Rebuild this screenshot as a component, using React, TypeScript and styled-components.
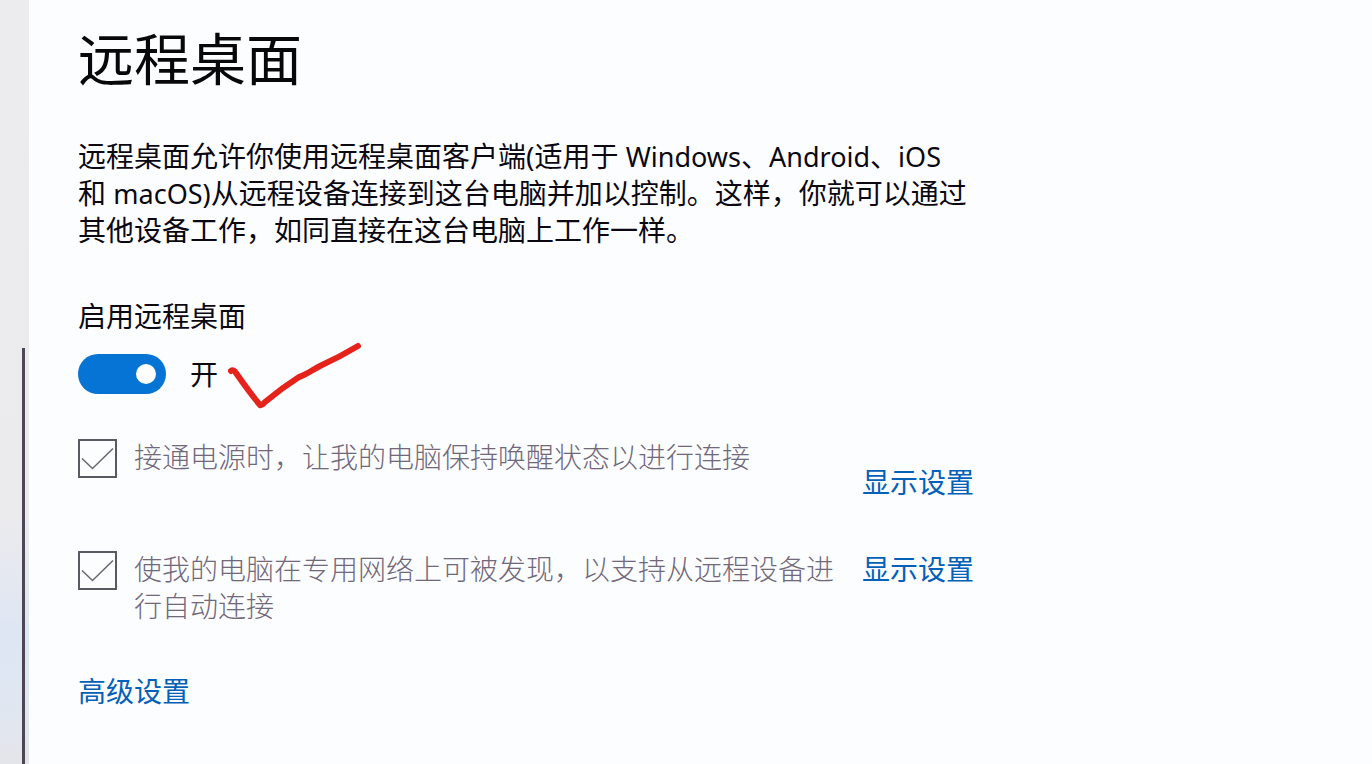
import React from "react";
import styled, { createGlobalStyle } from "styled-components";

const GlobalStyle = createGlobalStyle`
  * { box-sizing: border-box; }
  body {
    margin: 0;
    background: #fcfdff;
    color: #0b0812;
    font-family: "Noto Sans", "Noto Sans CJK SC", sans-serif;
    font-size: 28px;
    line-height: 37px;
  }
`;

const Page = styled.div`
  display: flex;
  min-height: 100vh;
`;

const Rail = styled.div`
  flex: none;
  display: flex;
  flex-direction: column;
  align-items: flex-end;
  width: 29px;
  padding: 348px 4px 0 0;
  background: linear-gradient(to bottom, #ececee 0%, #ebebee 68%, #dfe6f3 82%, #dfe7f3 90%, #e4e5ea 100%);
`;

const ScrollThumb = styled.div`
  flex: 1;
  width: 3px;
  background: #4d4655;
`;

const Main = styled.main`
  flex: 1;
  min-width: 0;
  padding: 26px 49px 40px;
`;

const Title = styled.h1`
  margin: 0;
  font-size: 56px;
  line-height: 64px;
  font-weight: 400;
  color: #08080a;
`;

const Description = styled.p`
  max-width: 896px;
  margin: 48px 0 0;
`;

const Latin = styled.span`
  font-size: 27px;
`;

const SwitchLabel = styled.label`
  display: block;
  margin-top: 49px;
`;

const SwitchRow = styled.div`
  position: relative;
  display: flex;
  align-items: center;
  gap: 24px;
  margin-top: 19px;
`;

const Switch = styled.input`
  appearance: none;
  display: flex;
  align-items: center;
  justify-content: flex-end;
  width: 88px;
  height: 40px;
  margin: 0;
  padding: 0 10px;
  border-radius: 20px;
  background: #0574d4;

  &::before {
    content: "";
    width: 20px;
    height: 20px;
    border-radius: 50%;
    background: #fff;
  }
  &:not(:checked) {
    justify-content: flex-start;
    background: #777;
  }
`;

const PenMark = styled.svg`
  position: absolute;
  left: 148px;
  top: -14px;
  width: 140px;
  height: 72px;
  pointer-events: none;
`;

const Options = styled.div`
  display: grid;
  row-gap: 50px;
  margin-top: 45px;
`;

const OptionRow = styled.div<{ $link: "end" | "start" }>`
  display: grid;
  grid-template-columns: 756px auto;
  column-gap: 28px;
  justify-content: start;
  align-items: ${(p) => p.$link};
  min-height: 62px;

  > label {
    align-self: start;
  }
`;

const OptionLabel = styled.label`
  display: flex;
  gap: 17px;
  color: #71687a;
  font-weight: 300;
`;

const Box = styled.span`
  flex: none;
  display: grid;
  width: 39px;
  height: 39px;

  > * {
    grid-area: 1 / 1;
  }
`;

const CheckInput = styled.input`
  appearance: none;
  width: 39px;
  height: 39px;
  margin: 0;
  border: 2px solid #5c5861;
  background: transparent;

  &:not(:checked) + svg {
    visibility: hidden;
  }
`;

const Link = styled.a`
  color: #0560b8;
  text-decoration: none;
`;

const Footer = styled.div`
  margin-top: 48px;
`;

type OptionProps = { text: string; link: "end" | "start" };

function SettingOption({ text, link }: OptionProps) {
  return (
    <OptionRow $link={link}>
      <OptionLabel>
        <Box>
          <CheckInput type="checkbox" defaultChecked />
          <svg width="39" height="39" viewBox="0 0 39 39" fill="none" aria-hidden="true">
            <path d="M4 19.5 L14.5 29.5 L35 9.5" stroke="#6a6570" strokeWidth="1.5" />
          </svg>
        </Box>
        <span>{text}</span>
      </OptionLabel>
      <Link href="#display">显示设置</Link>
    </OptionRow>
  );
}

export default function App() {
  return (
    <>
      <GlobalStyle />
      <Page>
        <Rail>
          <ScrollThumb />
        </Rail>
        <Main>
          <Title>远程桌面</Title>
          <Description>
            远程桌面允许你使用远程桌面客户端(适用于 <Latin>Windows</Latin>、<Latin>Android</Latin>、<Latin>iOS</Latin>{" "}
            和{"\u00a0"}<Latin>macOS)</Latin>从远程设备连接到这台电脑并加以控制。这样，你就可以通过其他设备工作，如同直接在这台电脑上工作一样。
          </Description>
          <SwitchLabel htmlFor="enable">启用远程桌面</SwitchLabel>
          <SwitchRow>
            <Switch id="enable" type="checkbox" role="switch" defaultChecked />
            <span>开</span>
            <PenMark viewBox="0 0 140 72" fill="none" aria-hidden="true">
              <path
                d="M5 31 C7 29.5 9 31 10 33 C17 43 24 53 34 65 C36 66 37 64 39 62 C51 52 62 44 73 37 C80 35 86 30 94 26 C107 20 117 15 132 6"
                stroke="#e5231b"
                strokeWidth="6"
                strokeLinecap="round"
                strokeLinejoin="round"
              />
            </PenMark>
          </SwitchRow>
          <Options>
            <SettingOption text="接通电源时，让我的电脑保持唤醒状态以进行连接" link="end" />
            <SettingOption text="使我的电脑在专用网络上可被发现，以支持从远程设备进行自动连接" link="start" />
          </Options>
          <Footer>
            <Link href="#advanced">高级设置</Link>
          </Footer>
        </Main>
      </Page>
    </>
  );
}
